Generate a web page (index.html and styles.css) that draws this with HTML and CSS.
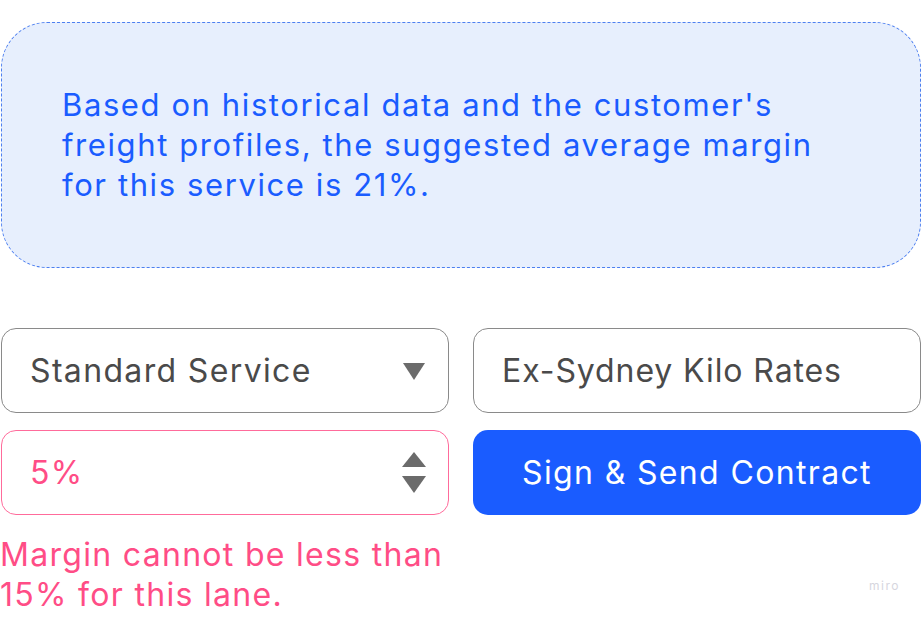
FILE: index.html
```html
<!DOCTYPE html>
<html>
<head>
<meta charset="utf-8">
<link rel="stylesheet" href="styles.css">
</head>
<body>
<div class="page">
  <div class="callout">
    <p>Based on historical data and the customer's<br>freight profiles, the suggested average margin<br>for this service is 21%.</p>
  </div>
  <div class="form">
    <div class="field select">
      <span>Standard Service</span>
      <svg class="caret" width="24" height="18" viewBox="0 0 24 18"><path d="M1 1 H23 L12 18 Z" fill="#6b6b6b"/></svg>
    </div>
    <div class="field">
      <span class="tight">Ex-Sydney Kilo Rates</span>
    </div>
    <div class="field error">
      <span>5%</span>
      <svg class="spin" width="24" height="42" viewBox="0 0 24 42"><path d="M12 0 L24 15 H0 Z" fill="#6b6b6b"/><path d="M0 24 H24 L12 41 Z" fill="#6b6b6b"/></svg>
    </div>
    <button class="btn">Sign &amp; Send Contract</button>
    <div class="msg">Margin cannot be less than<br>15% for this lane.</div>
  </div>
  <div class="miro">miro</div>
</div>
</body>
</html>
```
FILE: styles.css
```css
* { box-sizing: border-box; }
html, body { margin: 0; padding: 0; background: #fff; }
body { font-family: Inter, "Noto Sans", sans-serif; }
.page { width: 923px; height: 627px; padding: 22px 2px 0 1px; position: relative; }
.callout {
  height: 246px;
  background: #e7effd;
  border: 1px dashed #4d7ff0;
  border-radius: 46px;
  padding: 62px 20px 0 60px;
}
.callout p {
  margin: 0;
  color: #1a5cff;
  font-size: 31px;
  line-height: 40px;
  letter-spacing: 1.6px;
  white-space: nowrap;
}
.form {
  margin-top: 60px;
  display: grid;
  grid-template-columns: 448px 448px;
  column-gap: 24px;
  row-gap: 17px;
}
.field {
  height: 85px;
  border: 1px solid #8a8a8a;
  border-radius: 15px;
  display: flex;
  align-items: center;
  justify-content: space-between;
  padding: 0 22px 0 28px;
  font-size: 32px;
  letter-spacing: 1.35px;
  color: #4a4a4a;
}
.field .tight { letter-spacing: 0.9px; }
.field.error { border-color: #ff6b9b; color: #ff4d86; }
.btn {
  height: 85px;
  border: none;
  border-radius: 15px;
  background: #1a5cff;
  color: #fff;
  font-family: inherit;
  font-size: 32px;
  letter-spacing: 1.35px;
  padding: 0;
}
.msg {
  grid-column: 1;
  margin-top: 3px;
  margin-left: -1px;
  color: #ff4d86;
  font-size: 32px;
  line-height: 40px;
  letter-spacing: 1.3px;
  white-space: nowrap;
}
.miro {
  position: absolute;
  right: 23px;
  top: 578px;
  font-size: 12px;
  letter-spacing: 1.5px;
  color: #d6d6de;
}
```
